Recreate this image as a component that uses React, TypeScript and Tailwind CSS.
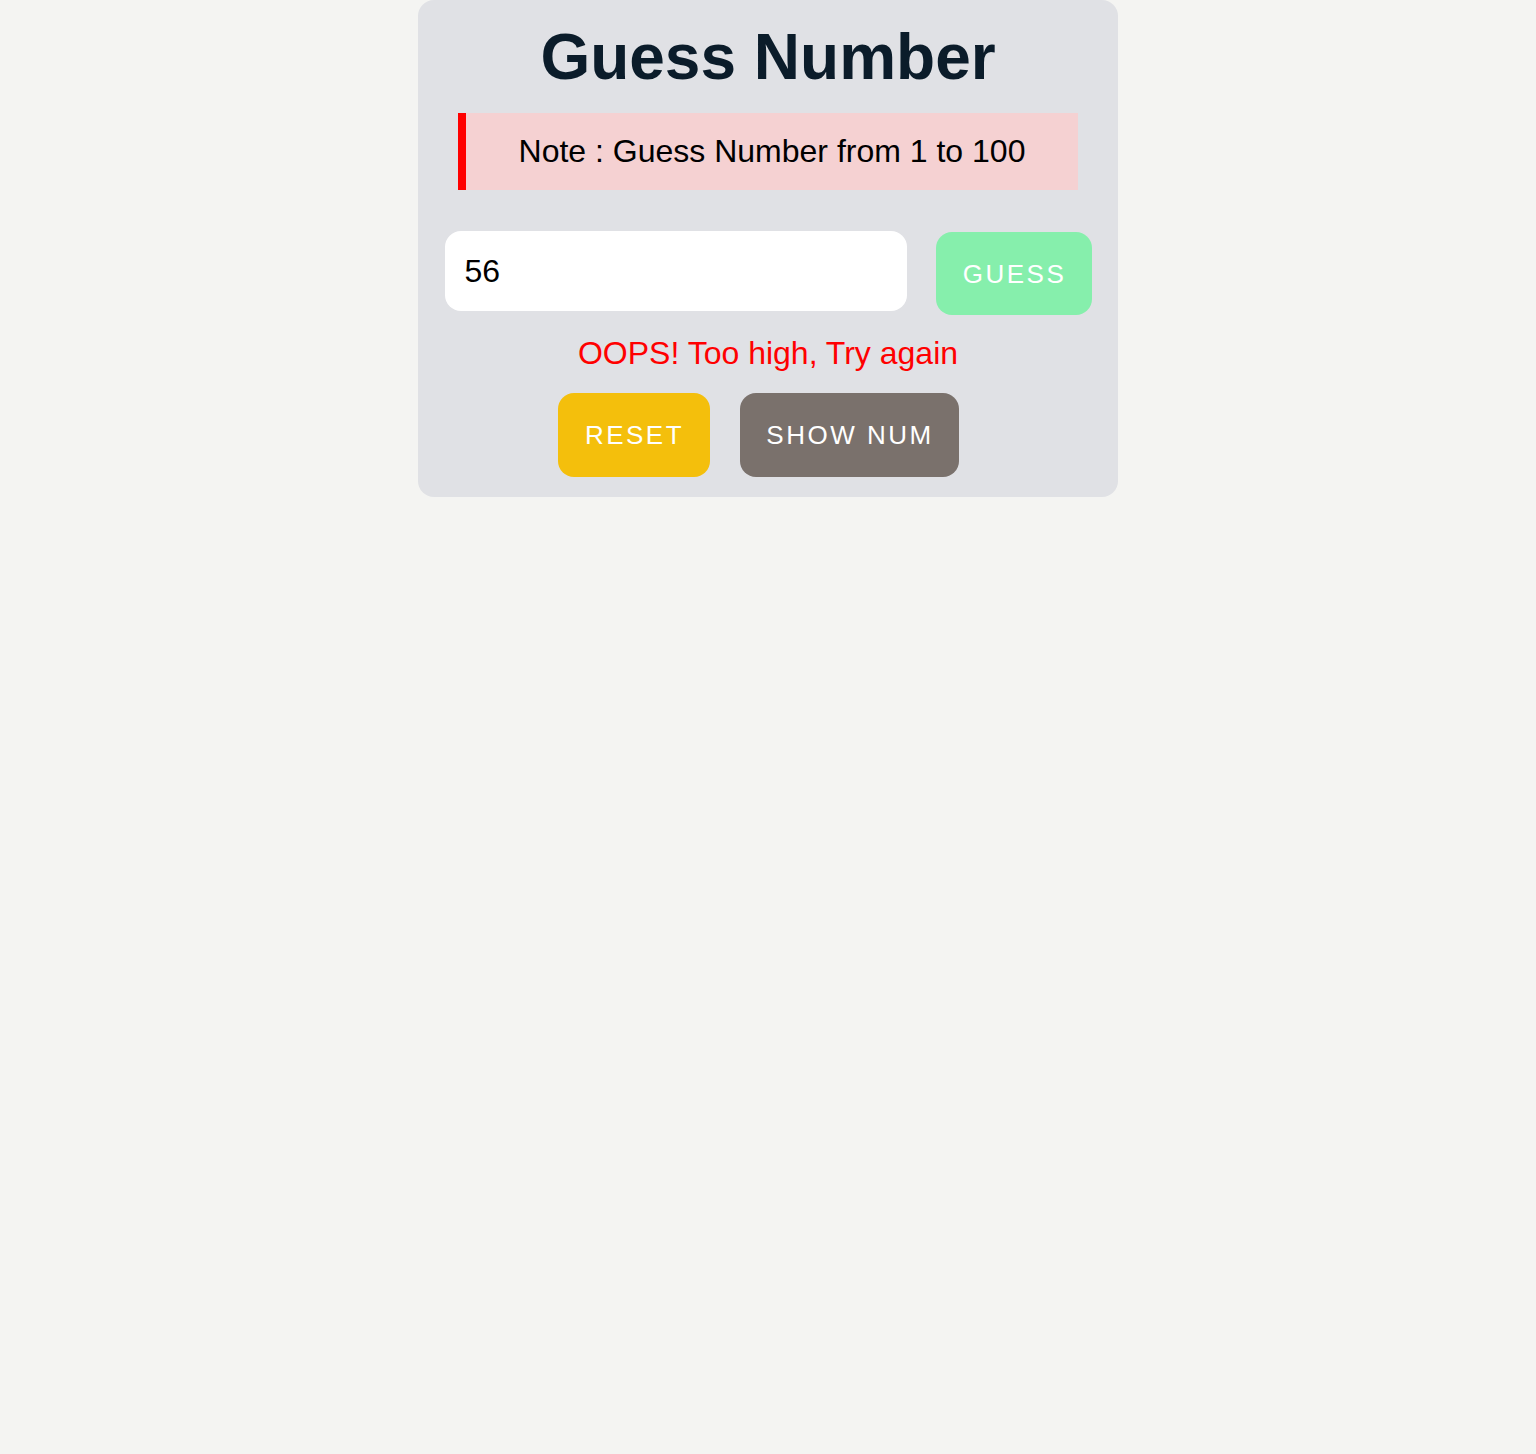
import React, { useState } from "react";

export default function App() {
  const [value, setValue] = useState("56");
  return (
    <div className="min-h-[1454px] w-full bg-[#f4f4f2] font-['Liberation_Sans',Arial,sans-serif]">
      <div className="mx-auto w-[700px] rounded-2xl bg-[#e0e1e5] pt-[20px] pb-[20px]">
        <h1 className="text-center text-[64px] leading-[74px] font-bold text-[#0b1c2a]">
          Guess Number
        </h1>
        <div className="mx-auto mt-[19px] w-[620px] border-l-8 border-[#ff0000] bg-[#f5d1d2] py-[20px] text-center text-[32px] leading-[37px] text-black">
          Note : Guess Number from 1 to 100
        </div>
        <div className="mt-[41px] flex items-start justify-center gap-[29px]">
          <input
            type="text"
            value={value}
            onChange={(e) => setValue(e.target.value)}
            className="h-[80px] w-[462px] rounded-2xl bg-white pl-[20px] text-[32px] text-black outline-none"
          />
          <button className="mt-[1px] flex h-[83px] w-[156px] items-center justify-center rounded-2xl bg-[#86efac] pl-[2px] text-[26px] leading-[30px] tracking-[2.5px] text-white">
            GUESS
          </button>
        </div>
        <p className="mt-[20px] text-center text-[32px] leading-[37px] text-[#ff0000]">
          OOPS! Too high, Try again
        </p>
        <div className="mt-[21px] flex justify-center gap-[30px]">
          <button className="flex h-[84px] w-[152px] items-center justify-center rounded-2xl bg-[#f4bf0c] pl-[2px] text-[26px] leading-[30px] tracking-[2.5px] text-white">
            RESET
          </button>
          <button className="mr-[20px] flex h-[84px] w-[219px] items-center justify-center rounded-2xl bg-[#7a716c] pl-[2px] text-[26px] leading-[30px] tracking-[2.5px] text-white">
            SHOW NUM
          </button>
        </div>
      </div>
    </div>
  );
}
